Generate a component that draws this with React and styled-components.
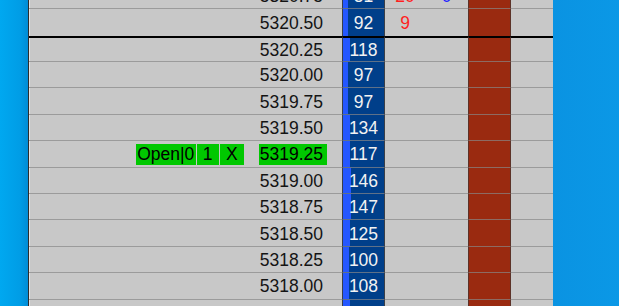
import React from "react";
import styled, { createGlobalStyle } from "styled-components";

const GlobalStyle = createGlobalStyle`
  html, body {
    margin: 0;
    padding: 0;
    overflow: hidden;
  }
`;

const rows = [
  { price: "5320.75", volume: 81, bid: "20", ask: "0" },
  { price: "5320.50", volume: 92, bid: "9", beforeSplit: true },
  { price: "5320.25", volume: 118, split: true },
  { price: "5320.00", volume: 97 },
  { price: "5319.75", volume: 97 },
  { price: "5319.50", volume: 134 },
  { price: "5319.25", volume: 117, active: true, order: { label: "Open|0", qty: "1" } },
  { price: "5319.00", volume: 146 },
  { price: "5318.75", volume: 147 },
  { price: "5318.50", volume: 125 },
  { price: "5318.25", volume: 100 },
  { price: "5318.00", volume: 108 },
  { price: "5317.75", volume: 131 },
];

const Desktop = styled.div`
  display: flex;
  width: 619px;
  height: 306px;
  overflow: hidden;
  font-family: "Liberation Sans", Arial, sans-serif;
  font-size: 17.5px;
`;

const LeftDesk = styled.div`
  width: 28px;
  flex: none;
  background: linear-gradient(90deg, #00a8f0 0%, #009de6 70%, #008cd6 100%);
`;

const RightDesk = styled.div`
  flex: 1;
  background: linear-gradient(90deg, #0a93e2 0%, #0b98e6 100%);
`;

const Ladder = styled.div`
  width: 525px;
  flex: none;
  border-left: 1px solid #2c2c2c;
  box-sizing: border-box;
  background: #c8c8c8;
  overflow: hidden;
`;

const RowList = styled.div`
  display: flex;
  flex-direction: column;
  margin-top: -17.2px;
`;

const Row = styled.div`
  display: flex;
  height: 26.4px;
  flex: none;
`;

const Cell = styled.div`
  box-sizing: border-box;
  height: 100%;
  display: flex;
  align-items: center;
  padding-top: 2px;
  border-top: ${(p) => (p.$split ? "2px solid #000" : "none")};
  border-bottom: ${(p) => (p.$beforeSplit ? "none" : "1px solid rgba(135, 135, 135, 0.7)")};
`;

const PriceCell = styled(Cell)`
  width: 313px;
  justify-content: flex-end;
  padding-right: 15px;
  box-shadow: inset 1px 0 0 #e4e4e4;
  color: #141414;
`;

const OrderTag = styled.div`
  display: flex;
  gap: 1px;
  margin-right: 15px;
`;

const TagBox = styled.div`
  width: ${(p) => p.$w}px;
  height: 21px;
  line-height: 21px;
  text-align: center;
  background: #00c800;
  color: #000;
`;

const Price = styled.span`
  height: 21px;
  line-height: 21px;
  padding: 0 4px 0 1px;
  background: ${(p) => (p.$active ? "#00c800" : "transparent")};
  color: ${(p) => (p.$active ? "#000" : "#141414")};
`;

const VolumeCell = styled(Cell)`
  width: 43px;
  position: relative;
  justify-content: center;
  background: #003f8a;
  border-left: 1px solid #3a3f48;
  border-right: 1px solid #3a3f48;
  color: #f2f2f2;
`;

const VolumeBar = styled.div`
  position: absolute;
  left: 0;
  top: 0;
  bottom: 0;
  background: #2457ff;
`;

const VolumeText = styled.span`
  position: relative;
`;

const BidAskCell = styled(Cell)`
  width: 83px;
  display: grid;
  grid-template-columns: 40px 43px;
  align-items: center;
  text-align: center;
`;

const Qty = styled.span`
  color: ${(p) => (p.$side === "ask" ? "#1f1fff" : "#ff1f1f")};
`;

const LastCell = styled(Cell)`
  width: 43px;
  background: #9a2a10;
  border-left: 1px solid #5c3228;
  border-right: 1px solid #5c3228;
`;

const SpareCell = styled(Cell)`
  flex: 1;
`;

const LadderRow = ({ row }) => {
  const flags = { $split: row.split, $beforeSplit: row.beforeSplit };
  return (
    <Row>
      <PriceCell {...flags}>
        {row.order && (
          <OrderTag>
            <TagBox $w={60}>{row.order.label}</TagBox>
            <TagBox $w={22}>{row.order.qty}</TagBox>
            <TagBox $w={24}>X</TagBox>
          </OrderTag>
        )}
        <Price $active={row.active}>{row.price}</Price>
      </PriceCell>
      <VolumeCell {...flags}>
        <VolumeBar style={{ width: Math.round(row.volume / 18) }} />
        <VolumeText>{row.volume}</VolumeText>
      </VolumeCell>
      <BidAskCell {...flags}>
        <Qty $side="bid">{row.bid}</Qty>
        <Qty $side="ask">{row.ask}</Qty>
      </BidAskCell>
      <LastCell {...flags} />
      <SpareCell {...flags} />
    </Row>
  );
};

const App = () => {
  return (
    <>
      <GlobalStyle />
      <Desktop>
        <LeftDesk />
        <Ladder>
          <RowList>
            {rows.map((row) => (
              <LadderRow key={row.price} row={row} />
            ))}
          </RowList>
        </Ladder>
        <RightDesk />
      </Desktop>
    </>
  );
};

export default App;
